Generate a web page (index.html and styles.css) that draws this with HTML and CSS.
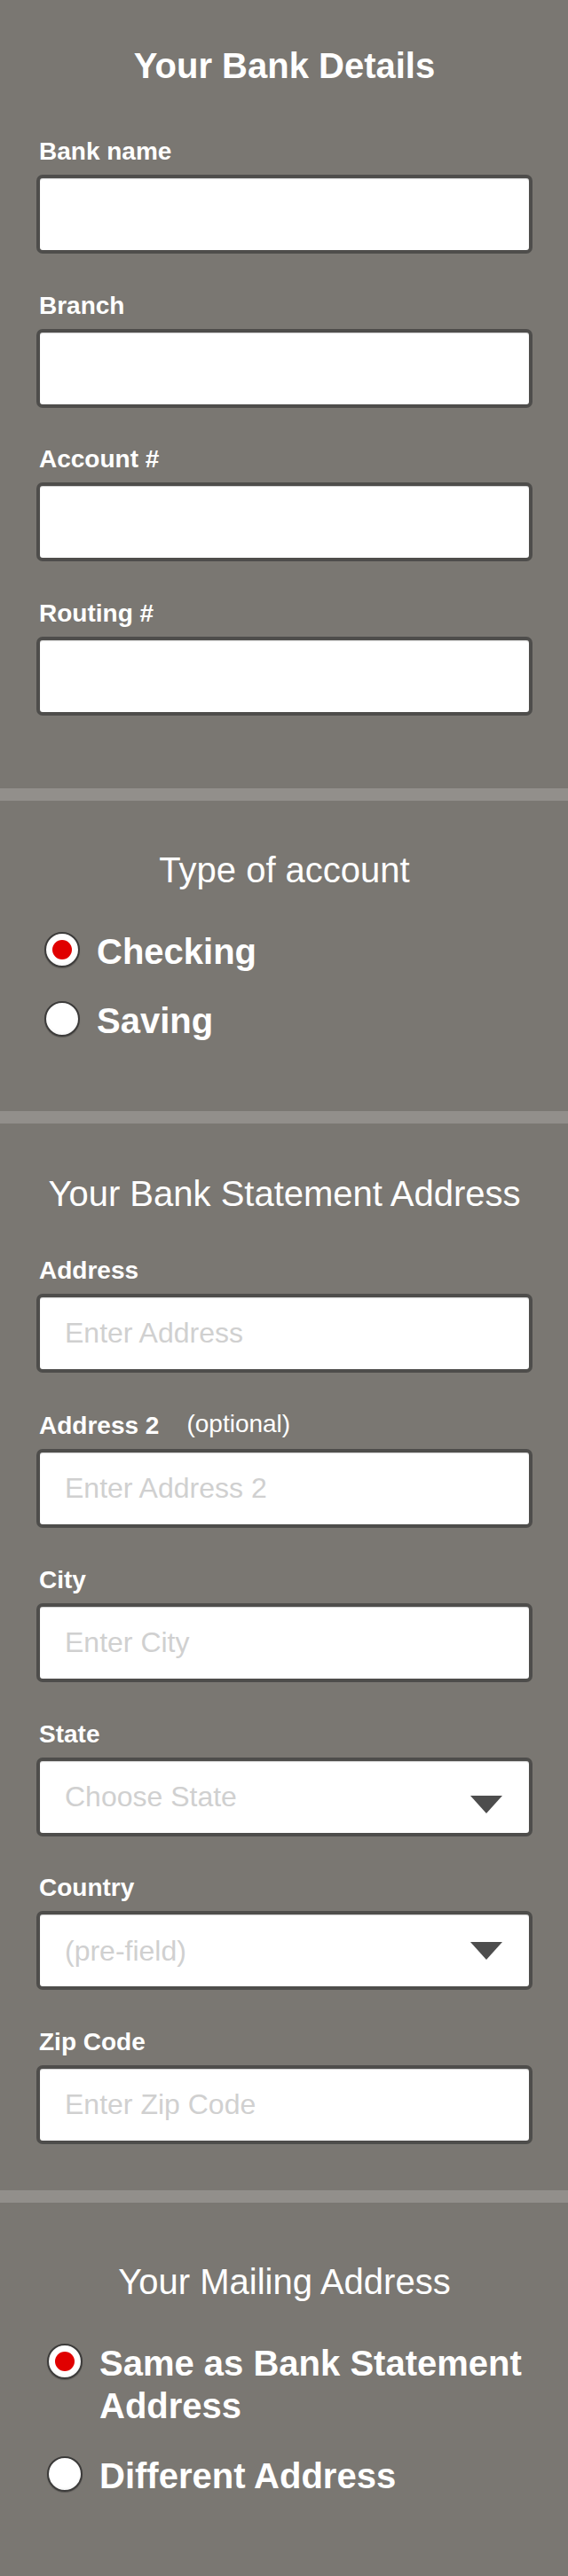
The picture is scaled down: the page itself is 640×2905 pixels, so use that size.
FILE: index.html
```html
<!DOCTYPE html>
<html lang="en">
<head>
<meta charset="utf-8">
<title>Your Bank Details</title>
<link rel="stylesheet" href="styles.css">
</head>
<body>
<main class="page">
  <section class="section section-bank">
    <h1 class="title title-bold">Your Bank Details</h1>
    <div class="fields">
      <div class="field">
        <label class="label">Bank name</label>
        <input class="box" type="text">
      </div>
      <div class="field">
        <label class="label">Branch</label>
        <input class="box" type="text">
      </div>
      <div class="field">
        <label class="label">Account #</label>
        <input class="box" type="text">
      </div>
      <div class="field">
        <label class="label">Routing #</label>
        <input class="box" type="text">
      </div>
    </div>
  </section>

  <div class="divider"></div>

  <section class="section section-type">
    <h2 class="title">Type of account</h2>
    <div class="radios">
      <div class="radio-row">
        <span class="radio checked"><span class="dot"></span></span>
        <span class="radio-text">Checking</span>
      </div>
      <div class="radio-row">
        <span class="radio"></span>
        <span class="radio-text">Saving</span>
      </div>
    </div>
  </section>

  <div class="divider"></div>

  <section class="section section-address">
    <h2 class="title">Your Bank Statement Address</h2>
    <div class="fields">
      <div class="field">
        <label class="label">Address</label>
        <input class="box" type="text" placeholder="Enter Address">
      </div>
      <div class="field">
        <label class="label">Address 2<span class="optional">(optional)</span></label>
        <input class="box" type="text" placeholder="Enter Address 2">
      </div>
      <div class="field">
        <label class="label">City</label>
        <input class="box" type="text" placeholder="Enter City">
      </div>
      <div class="field">
        <label class="label">State</label>
        <div class="box select select-state">
          <span class="select-text">Choose State</span>
          <svg class="arrow" width="36" height="20" viewBox="0 0 36 20"><polygon points="0,0 36,0 18,20" fill="#4d4d4d"/></svg>
        </div>
      </div>
      <div class="field">
        <label class="label">Country</label>
        <div class="box select select-country">
          <span class="select-text">(pre-field)</span>
          <svg class="arrow" width="36" height="20" viewBox="0 0 36 20"><polygon points="0,0 36,0 18,20" fill="#4d4d4d"/></svg>
        </div>
      </div>
      <div class="field">
        <label class="label">Zip Code</label>
        <input class="box" type="text" placeholder="Enter Zip Code">
      </div>
    </div>
  </section>

  <div class="divider"></div>

  <section class="section section-mailing">
    <h2 class="title">Your Mailing Address</h2>
    <div class="radios radios-wide">
      <div class="radio-row">
        <span class="radio checked"><span class="dot"></span></span>
        <span class="radio-text">Same as Bank Statement Address</span>
      </div>
      <div class="radio-row">
        <span class="radio"></span>
        <span class="radio-text">Different Address</span>
      </div>
    </div>
  </section>
</main>
</body>
</html>
```

FILE: styles.css
```css
html {
  background: #7a7772;
}

body {
  margin: 0;
  background: #7a7772;
  font-family: "Liberation Sans", Arial, Helvetica, sans-serif;
  color: #ffffff;
}

.page {
  width: 640px;
}

.section {
  padding: 0 40px 0 41px;
}

.section-bank {
  padding-top: 54px;
  padding-bottom: 82px;
}

.section-type {
  padding-top: 58px;
  padding-bottom: 78px;
}

.section-address {
  padding-top: 59px;
  padding-bottom: 52px;
}

.section-mailing {
  padding-top: 69px;
  padding-bottom: 91px;
}

.divider {
  height: 14px;
  background: #928f8b;
}

.title {
  margin: 0;
  font-size: 40px;
  line-height: 40px;
  font-weight: normal;
  text-align: center;
}

.title-bold {
  font-weight: bold;
}

.fields {
  display: flex;
  flex-direction: column;
  gap: 44.6px;
}

.section-bank .fields {
  margin-top: 63px;
}

.section-address .fields {
  margin-top: 53px;
}

.field {
  display: flex;
  flex-direction: column;
  gap: 12px;
}

.label {
  display: block;
  font-size: 28px;
  line-height: 28px;
  font-weight: bold;
  padding-left: 3px;
}

.optional {
  font-weight: normal;
  margin-left: 31px;
  vertical-align: 2px;
}

.box {
  box-sizing: border-box;
  display: block;
  width: 559px;
  height: 89px;
  margin: 0;
  border: 4px solid #4e4d4b;
  border-radius: 7px;
  background: #ffffff;
  box-shadow: inset 0 1px 1px rgba(0, 0, 0, 0.18);
  padding: 0 28px;
  font-family: "Liberation Sans", Arial, Helvetica, sans-serif;
  font-size: 32px;
  line-height: 32px;
  color: #333333;
  outline: none;
}

.box::placeholder {
  color: #d0d0d0;
  opacity: 1;
}

.select {
  display: flex;
  align-items: center;
  justify-content: space-between;
  padding-right: 30px;
}

.select-text {
  color: #d0d0d0;
  font-size: 32px;
  line-height: 32px;
}

.arrow {
  display: block;
  flex: none;
}

.select-state .arrow {
  margin-top: 17px;
}

.select-country .arrow {
  margin-top: 0;
}

.radios {
  display: flex;
  flex-direction: column;
  gap: 30px;
  margin-top: 48px;
  margin-left: 9px;
}

.radios-wide {
  gap: 31px;
  margin-left: 12px;
}

.radio-row {
  display: flex;
  align-items: flex-start;
  gap: 19px;
}

.radio {
  box-sizing: border-box;
  flex: none;
  width: 40px;
  height: 40px;
  margin-top: 2px;
  border: 2px solid #3c3b3a;
  border-radius: 50%;
  background: radial-gradient(circle at 50% 45%, #ffffff 60%, #e6e6e6 100%);
  box-shadow: 0 1px 1px rgba(0, 0, 0, 0.25);
  display: flex;
  align-items: center;
  justify-content: center;
}

.dot {
  width: 22px;
  height: 22px;
  border-radius: 50%;
  background: #e00000;
}

.radio-text {
  font-size: 40px;
  line-height: 48px;
  font-weight: bold;
}
```
